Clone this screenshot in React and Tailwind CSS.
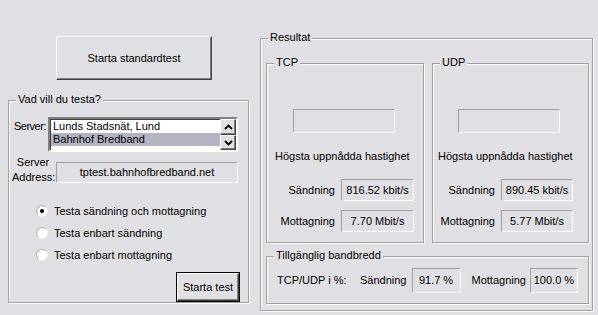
import React from 'react';

const etched = "border border-[#a0a0a0] shadow-[inset_1px_1px_0_#fff,1px_1px_0_#fff]";
const sunken = "border border-t-[#a0a0a0] border-l-[#a0a0a0] border-b-white border-r-white";
const raised = "border border-t-white border-l-white border-b-[#404040] border-r-[#404040] shadow-[inset_-1px_-1px_0_#808080]";

const Group = ({ label, className, children }) => (
    <div className={`relative ${etched} ${className}`}>
        <span className="absolute left-[7px] top-[-8px] px-[2px] bg-[#e0dfe3] leading-[13px]">{label}</span>
        {children}
    </div>
);

const ValueBox = ({ className, children }) => (
    <div className={`${sunken} flex items-center justify-center ${className}`}>{children}</div>
);

const Radio = ({ checked, label }) => (
    <div className="h-[22px] flex items-center ml-[22px]">
        <div className="w-[12px] h-[12px] rounded-full bg-white border border-t-[#b0b0b0] border-l-[#b0b0b0] border-b-[#f4f4f4] border-r-[#f4f4f4] flex items-center justify-center">
            {checked && <div className="w-[4px] h-[4px] rounded-full bg-black" />}
        </div>
        <span className="ml-[6px]">{label}</span>
    </div>
);

const Arrow = ({ down }) => (
    <svg width="9" height="6" viewBox="0 0 9 6">
        <path d={down ? "M1 1 L4.5 4.5 L8 1" : "M1 5 L4.5 1.5 L8 5"} stroke="#000" strokeWidth="1.8" fill="none" />
    </svg>
);

const Speeds = ({ send, recv, boxW, pr }) => (
    <div className={`flex flex-col items-end mt-[16px] ${pr}`}>
        <div className="flex items-center">
            <span className="mr-[6px]">Sändning</span>
            <ValueBox className={`${boxW} h-[22px]`}>{send}</ValueBox>
        </div>
        <div className="flex items-center mt-[9px]">
            <span className="mr-[6px]">Mottagning</span>
            <ValueBox className={`${boxW} h-[22px]`}>{recv}</ValueBox>
        </div>
    </div>
);

const App = () => {
    return (
        <main className="w-[598px] h-[315px] bg-[#e0dfe3] flex text-black text-[11px] leading-[13px] font-['Liberation_Sans',Arial,sans-serif] overflow-hidden">
            <div className="pl-[8px] w-[252px] flex flex-col">
                <button className={`${raised} mt-[36px] ml-[48px] w-[156px] h-[44px] bg-[#e0dfe3]`}>
                    Starta standardtest
                </button>
                <Group label="Vad vill du testa?" className="mt-[20px] w-[241px] h-[203px] pl-[5px] pt-[16px] flex flex-col">
                    <div className="flex items-start">
                        <span className="w-[34px] mt-[3px] tracking-[-0.5px] whitespace-nowrap">Server:</span>
                        <div className="w-[190px] h-[35px] bg-white border-2 border-t-[#808080] border-l-[#808080] border-b-white border-r-white shadow-[inset_1px_1px_0_#404040] flex">
                            <div className="flex-1 pt-[1px] pl-[1px]">
                                <div className="h-[13px] px-[2px] leading-[13px]">Lunds Stadsnät, Lund</div>
                                <div className="h-[13px] px-[2px] leading-[13px] bg-[#b3b4c0]">Bahnhof Bredband</div>
                            </div>
                            <div className="w-[16px] flex flex-col">
                                <div className={`${raised} h-[16px] bg-[#e0dfe3] flex items-center justify-center`}><Arrow /></div>
                                <div className={`${raised} h-[15px] bg-[#e0dfe3] flex items-center justify-center`}><Arrow down /></div>
                            </div>
                        </div>
                    </div>
                    <div className="flex items-start -ml-[2px] mt-[3px]">
                        <div className="w-[42px] text-center leading-[15px]">
                            <div>Server</div>
                            <div>Address:</div>
                        </div>
                        <ValueBox className="ml-[2px] mt-[7px] w-[182px] h-[21px]">tptest.bahnhofbredband.net</ValueBox>
                    </div>
                    <div className="mt-[15px]">
                        <Radio checked label="Testa sändning och mottagning" />
                        <Radio label="Testa enbart sändning" />
                        <Radio label="Testa enbart mottagning" />
                    </div>
                    <button className="self-end mr-[8px] mt-[6px] w-[64px] h-[30px] border border-black bg-[#e0dfe3]">
                        <div className={`${raised} w-full h-full flex items-center justify-center`}>Starta test</div>
                    </button>
                </Group>
            </div>
            <Group label="Resultat" className="mt-[38px] ml-[8px] w-[333px] h-[273px] pl-[5px] pt-[24px]">
                <div className="flex">
                    <Group label="TCP" className="w-[158px] h-[180px] flex flex-col">
                        <div className={`${sunken} mt-[45px] ml-[26px] w-[102px] h-[24px]`} />
                        <div className="mt-[17px] ml-[8px]">Högsta uppnådda hastighet</div>
                        <Speeds send="816.52 kbit/s" recv="7.70 Mbit/s" boxW="w-[73px]" pr="pr-[9px]" />
                    </Group>
                    <Group label="UDP" className="ml-[8px] w-[157px] h-[180px] flex flex-col">
                        <div className={`${sunken} mt-[45px] ml-[25px] w-[102px] h-[24px]`} />
                        <div className="mt-[17px] ml-[5px]">Högsta uppnådda hastighet</div>
                        <Speeds send="890.45 kbit/s" recv="5.77 Mbit/s" boxW="w-[72px]" pr="pr-[15px]" />
                    </Group>
                </div>
                <Group label="Tillgänglig bandbredd" className="mt-[13px] w-[323px] h-[48px] pl-[10px] pt-[11px]">
                    <div className="flex items-center">
                        <span className="w-[83px]">TCP/UDP i %:</span>
                        <span>Sändning</span>
                        <ValueBox className="ml-[5px] w-[49px] h-[25px]">91.7 %</ValueBox>
                        <span className="ml-[11px]">Mottagning</span>
                        <ValueBox className="ml-[4px] w-[48px] h-[25px]">100.0 %</ValueBox>
                    </div>
                </Group>
            </Group>
        </main>
    );
};

export default App;
